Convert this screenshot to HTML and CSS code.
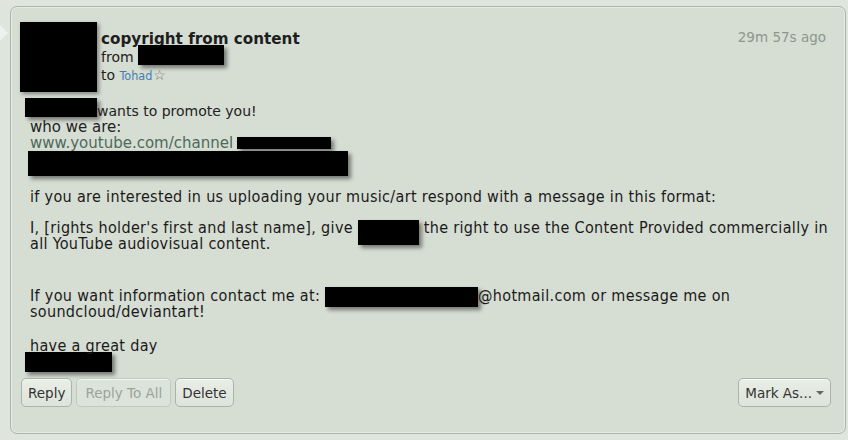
FILE: index.html
```html
<!DOCTYPE html>
<html>
<head>
<meta charset="utf-8">
<link rel="stylesheet" href="styles.css">
</head>
<body>
<div class="tail"></div>
<div class="card">
  <div class="head">
    <div class="avatar"></div>
    <div class="meta">
      <div class="title">copyright from content</div>
      <div class="from">from <span class="redact r-from"></span></div>
      <div class="to">to <a class="user">Tohad</a><span class="star">☆</span></div>
    </div>
    <div class="time">29m 57s ago</div>
  </div>
  <div class="body">
    <div class="line v"><span class="redact r1"></span>wants to promote you!</div>
    <div class="line v w">who we are:</div>
    <div class="line v w"><a class="link">www.youtube.com/channel</a><span class="redact r3"></span></div>
    <div class="redact block r4"></div>
    <div class="line c gap5">if you are interested in us uploading your music/art respond with a message in this format:</div>
    <div class="line c gap6">I, [rights holder's first and last name], give <span class="redact r6"></span> the right to use the Content Provided commercially in</div>
    <div class="line c">all YouTube audiovisual content.</div>
    <div class="line c gap8">If you want information contact me at: <span class="redact r8"></span>@hotmail.com or message me on</div>
    <div class="line c">soundcloud/deviantart!</div>
    <div class="line c gap10">have a great day</div>
    <div class="redact block r11"></div>
  </div>
  <div class="actions">
    <div class="left">
      <span class="btn">Reply</span>
      <span class="btn off">Reply To All</span>
      <span class="btn">Delete</span>
    </div>
    <span class="btn mark">Mark As... <span class="caret"></span></span>
  </div>
</div>
</body>
</html>
```
FILE: styles.css
```css
html, body { margin: 0; padding: 0; }
body {
  background: #dfe5dd;
  width: 848px;
  height: 440px;
  overflow: hidden;
  position: relative;
  font-family: "DejaVu Sans", Verdana, sans-serif;
  color: #222;
}
.tail {
  position: absolute;
  left: 0;
  top: 25px;
  width: 0; height: 0;
  border-top: 8px solid transparent;
  border-bottom: 8px solid transparent;
  border-left: 8px solid #eef2ec;
}
.card {
  margin: 6px 2px 0 10px;
  height: 428px;
  box-sizing: border-box;
  border: 1px solid #aab5a8;
  border-radius: 7px;
  background: #d6ddd3;
  box-shadow: inset 0 0 0 1px #e6ebe4;
  padding: 15px 15px 0 9px;
}
.head { display: flex; align-items: flex-start; }
.avatar { width: 77px; height: 70px; background: #000; box-shadow: 2px 2px 4px rgba(0,0,0,.4); }
.meta { margin-left: 4px; margin-top: 8px; flex: 1; font-size: 14px; line-height: 18px; }
.title { font-weight: bold; font-size: 15.2px; color: #1e1e1e; }
.from, .to { height: 18px; }
.user { color: #3d7fb8; font-size: 12.5px; font-family: "DejaVu Sans Condensed", "DejaVu Sans", sans-serif; font-stretch: condensed; }
.star { color: #6f786f; font-size: 14px; margin-left: 1px; }
.time { margin-top: 7px; margin-right: 4px; font-size: 13.5px; color: #8c978c; line-height: 16px; }
.body { padding-left: 10px; margin-top: 11px; }
.line { height: 16px; line-height: 16px; white-space: nowrap; font-size: 14px; }
.v { color: #222; }
.w { font-size: 15px; }
.c {
  color: #1a1a1a;
  font-family: "DejaVu Sans Condensed", "DejaVu Sans", sans-serif;
  font-stretch: condensed;
  font-size: 16px;
  letter-spacing: 0.33px;
}
.link { color: #4d6a5c; }
.redact { display: inline-block; vertical-align: top; background: #000; box-shadow: 3px 3px 4px rgba(0,0,0,.45); letter-spacing: 0; }
.block { display: block; }
.r-from { width: 86px; height: 20px; margin-top: -3px; vertical-align: top; }
.r1 { width: 72px; height: 19px; margin-top: -5px; margin-left: -5px; }
.r3 { width: 94px; height: 12px; margin-top: 2px; margin-left: 4px; }
.r4 { width: 320px; height: 25px; margin-left: -2px; margin-top: 0; }
.r6 { width: 61px; height: 25px; margin-top: 0; }
.r8 { width: 153px; height: 20px; margin-top: -1px; }
.r11 { width: 87px; height: 20px; margin-left: -5px; margin-top: -2px; }
.gap5 { margin-top: 13px; }
.gap6 { margin-top: 15px; }
.gap8 { margin-top: 36px; }
.gap10 { margin-top: 18px; }
.actions { display: flex; justify-content: space-between; align-items: center; margin-top: 6px; margin-left: 1px; margin-right: -1px; }
.left { display: flex; gap: 4px; }
.btn {
  display: inline-flex; align-items: center;
  height: 29px; padding: 0 6px;
  box-sizing: border-box;
  border: 1px solid #aab4a8; border-radius: 5px;
  background: linear-gradient(#e9eee7, #dde4db);
  box-shadow: inset 0 1px 0 #f4f7f3;
  font-size: 13.5px; color: #333;
}
.btn.off { color: #9aa49a; border-color: #c2cac0; background: #dce3da; padding: 0 8px; }
.mark { padding: 0 6px 0 6px; }
.caret { display: inline-block; width: 0; height: 0; margin-left: 4px; border-left: 4px solid transparent; border-right: 4px solid transparent; border-top: 4px solid #666; }
```
